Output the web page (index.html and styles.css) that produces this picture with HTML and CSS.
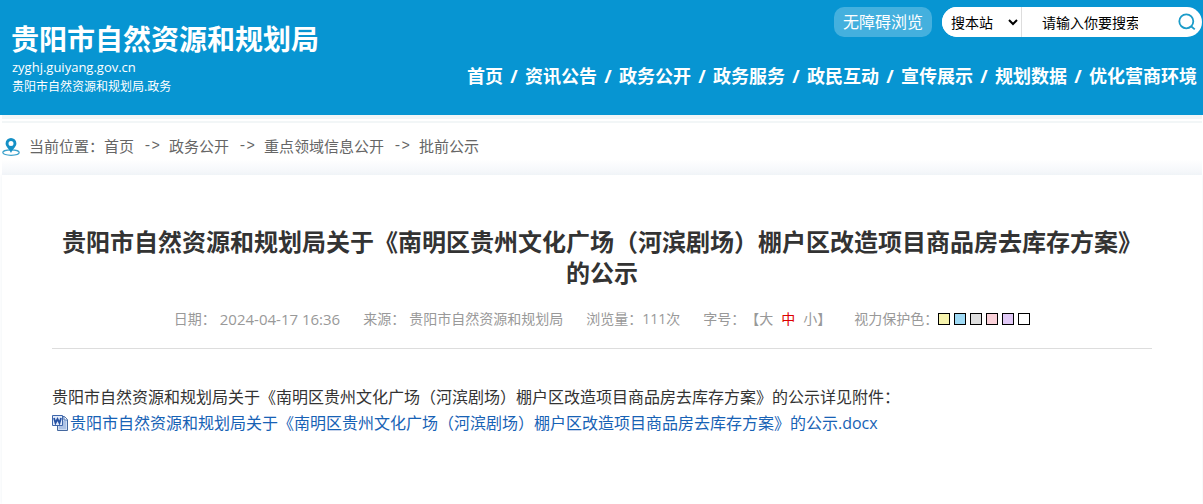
FILE: index.html
```html
<!DOCTYPE html>
<html lang="zh-CN">
<head>
<meta charset="utf-8">
<meta name="viewport" content="width=device-width, initial-scale=1">
<title>贵阳市自然资源和规划局</title>
<link rel="stylesheet" href="styles.css">
</head>
<body>
<header class="site-header">
  <div class="brand">
    <div class="brand-name">贵阳市自然资源和规划局</div>
    <div class="brand-domain">zyghj.guiyang.gov.cn</div>
    <div class="brand-sub">贵阳市自然资源和规划局.政务</div>
  </div>
  <div class="header-right">
    <div class="tools">
      <a class="accessible" href="#">无障碍浏览</a>
      <form class="search">
        <select class="search-scope" aria-label="搜索范围"><option>搜本站</option></select>
        <input class="search-input" type="text" aria-label="搜索" placeholder="请输入你要搜索">
        <button class="search-button" type="button" aria-label="提交搜索">
          <svg width="18" height="18" viewBox="0 0 18 18" fill="none" stroke="#1b9cc9" stroke-width="1.8"><circle cx="8.3" cy="8.3" r="7"/><path d="M13 13.2l3.8 3.2"/></svg>
        </button>
      </form>
    </div>
    <nav class="nav">
      <a href="#">首页</a><span class="slash">/</span><a href="#">资讯公告</a><span class="slash">/</span><a href="#">政务公开</a><span class="slash">/</span><a href="#">政务服务</a><span class="slash">/</span><a href="#">政民互动</a><span class="slash">/</span><a href="#">宣传展示</a><span class="slash">/</span><a href="#">规划数据</a><span class="slash">/</span><a href="#">优化营商环境</a>
    </nav>
  </div>
</header>
<main class="page">
  <div class="rule rule-thick"></div>
  <div class="rule"></div>
  <nav class="crumbs" aria-label="当前位置">
    <svg class="pin" width="18" height="18" viewBox="0 0 18 18"><ellipse cx="9" cy="14.6" rx="8.2" ry="2.7" fill="#fff" stroke="#3aa0cb" stroke-width="1.2"/><path fill="#1590c6" fill-rule="evenodd" d="M9 0a5.4 5.4 0 0 1 5.4 5.4C14.4 8.800 10.800 10.500 9 15 7.200 10.500 3.600 8.800 3.600 5.400A5.400 5.400 0 0 1 9 0zM9 3a2.500 2.500 0 1 0 0 5 2.500 2.500 0 0 0 0-5z"/></svg>
    <span class="crumb-label">当前位置：</span><a href="#">首页</a><span class="arrow">-&gt;</span><a href="#">政务公开</a><span class="arrow">-&gt;</span><a href="#">重点领域信息公开</a><span class="arrow">-&gt;</span><a href="#">批前公示</a>
  </nav>
  <article class="card">
    <h1 class="title">贵阳市自然资源和规划局关于《南明区贵州文化广场（河滨剧场）棚户区改造项目商品房去库存方案》的公示</h1>
    <div class="meta">
      <div class="meta-item"><span>日期：</span><span class="meta-value date">2024-04-17 16:36</span></div>
      <div class="meta-item"><span>来源：</span><span class="meta-value">贵阳市自然资源和规划局</span></div>
      <div class="meta-item">浏览量：111次</div>
      <div class="meta-item sizes">字号：【<a href="#">大</a><a class="current" href="#">中</a><a href="#">小</a>】</div>
      <div class="meta-item">视力保护色：<span class="swatches"><button class="swatch yellow" aria-label="黄色"></button><button class="swatch blue" aria-label="蓝色"></button><button class="swatch gray" aria-label="灰色"></button><button class="swatch pink" aria-label="粉色"></button><button class="swatch purple" aria-label="紫色"></button><button class="swatch white" aria-label="白色"></button></span></div>
    </div>
    <div class="content">
      <p>贵阳市自然资源和规划局关于《南明区贵州文化广场（河滨剧场）棚户区改造项目商品房去库存方案》的公示详见附件：</p>
      <p class="attachment">
        <svg width="16" height="16" viewBox="0 0 16 16"><path d="M5.500 1.500h7l3 3v11h-10z" fill="#cfdef5" stroke="#44689f"/><path d="M12 1.500V5h3.500" fill="#fff" stroke="#5278b5"/><path d="M11 7h3M11 9h3M7 11h7M7 13h7" stroke="#8ba7d5"/><path d="M.5.500h10v10H.500z" fill="#e3ecfb" stroke="#3f66aa"/><path d="M2 3l1.500 5L5.500 4l2 4L9 3" fill="none" stroke="#2752a3" stroke-width="1.800"/></svg><a href="#">贵阳市自然资源和规划局关于《南明区贵州文化广场（河滨剧场）棚户区改造项目商品房去库存方案》的公示.docx</a>
      </p>
    </div>
  </article>
</main>
</body>
</html>
```
FILE: styles.css
```css
* {
  box-sizing: border-box;
}

body {
  margin: 0;
  background: #fff;
  color: #333;
  font-family: "Open Sans", "Noto Sans CJK SC", sans-serif;
  font-size: 14px;
  text-spacing-trim: space-all;
  overflow-x: hidden;
}

a {
  color: inherit;
  text-decoration: none;
}

.site-header {
  display: flex;
  justify-content: space-between;
  min-height: 115px;
  background: #0795d2;
  color: #fff;
}

.brand {
  padding: 23px 0 0 11px;
  white-space: nowrap;
}

.brand-name {
  margin-bottom: 2px;
  font-size: 28px;
  font-weight: 700;
  line-height: 32px;
}

.brand-domain {
  padding-left: 1px;
  font-size: 13px;
  line-height: 20px;
}

.brand-sub {
  padding-left: 1px;
  font-size: 12px;
  line-height: 20px;
}

.header-right {
  display: flex;
  flex-direction: column;
  align-items: flex-end;
  padding-top: 7px;
}

.tools {
  display: flex;
  gap: 10px;
}

.accessible {
  padding: 0 9px;
  border-radius: 10px;
  background: #44b0de;
  font-size: 16px;
  line-height: 30px;
}

.search {
  display: flex;
  width: 260px;
  height: 30px;
  margin-right: 1px;
  border-radius: 15px;
  background: #fff;
  overflow: hidden;
}

.search-scope {
  width: 80px;
  padding: 0 0 0 5px;
  border: 0;
  border-right: 1px solid #ddd;
  background: #fff;
  color: #000;
  font: inherit;
}

.search-input {
  width: 116px;
  padding: 0 0 0 20px;
  border: 0;
  background: transparent;
  font: inherit;
}

.search-input::placeholder {
  color: #000;
}

.search-button {
  display: flex;
  align-items: center;
  margin-left: auto;
  padding: 0 6px;
  border: 0;
  background: transparent;
}

.nav {
  display: flex;
  padding: 26px 6px 0 0;
  font-size: 18px;
  font-weight: 700;
  line-height: 26px;
  white-space: nowrap;
}

.slash {
  width: 22px;
  text-align: center;
}

.page {
  max-width: 1200px;
  margin: 0 1px 0 2px;
}

.rule {
  height: 2px;
  margin-top: 2px;
  background: #f2f6f7;
}

.rule-thick {
  height: 4px;
  margin-top: 0;
}

.crumbs {
  display: flex;
  align-items: flex-start;
  height: 52px;
  padding-top: 12px;
  color: #666;
  font-size: 15px;
  line-height: 22px;
  background: linear-gradient(#fff 70%, #f2f5f9);
}

.pin {
  margin: 3px 9px 0 0;
}

.arrow {
  width: 35px;
  font-family: "Liberation Mono", monospace;
  font-size: 14px;
  text-align: center;
}

.card {
  min-height: 329px;
  padding: 51px 50px 0;
  background: #fff;
  box-shadow: 0 0 4px #eef2f6;
}

.title {
  margin: 0;
  font-size: 24px;
  font-weight: 700;
  line-height: 31px;
  text-align: center;
}

.meta {
  display: flex;
  justify-content: center;
  gap: 23px;
  padding: 21px 0 19px;
  border-bottom: 1px solid #ddd;
  color: #999;
  line-height: 20px;
  white-space: nowrap;
}

.meta-item {
  display: flex;
}

.meta-value {
  margin-left: 4px;
}

.date {
  font-size: 15px;
}

.sizes a {
  margin-right: 8px;
}

.sizes a:last-child {
  margin-right: 0;
}

.sizes .current {
  color: #d00;
}

.swatches {
  display: flex;
  align-items: center;
  gap: 4px;
}

.swatch {
  width: 12px;
  height: 12px;
  padding: 0;
  border: 1px solid #000;
}

.yellow { background: #f6f3ad; }
.blue { background: #9fdaf5; }
.gray { background: #dedede; }
.pink { background: #fad1d9; }
.purple { background: #e1c9f6; }
.white { background: #fff; }

.content {
  padding-top: 35px;
  font-size: 16px;
  line-height: 26px;
}

.content p {
  margin: 0;
}

.attachment {
  display: flex;
  align-items: center;
  gap: 2px;
  color: #1762b5;
}
```
